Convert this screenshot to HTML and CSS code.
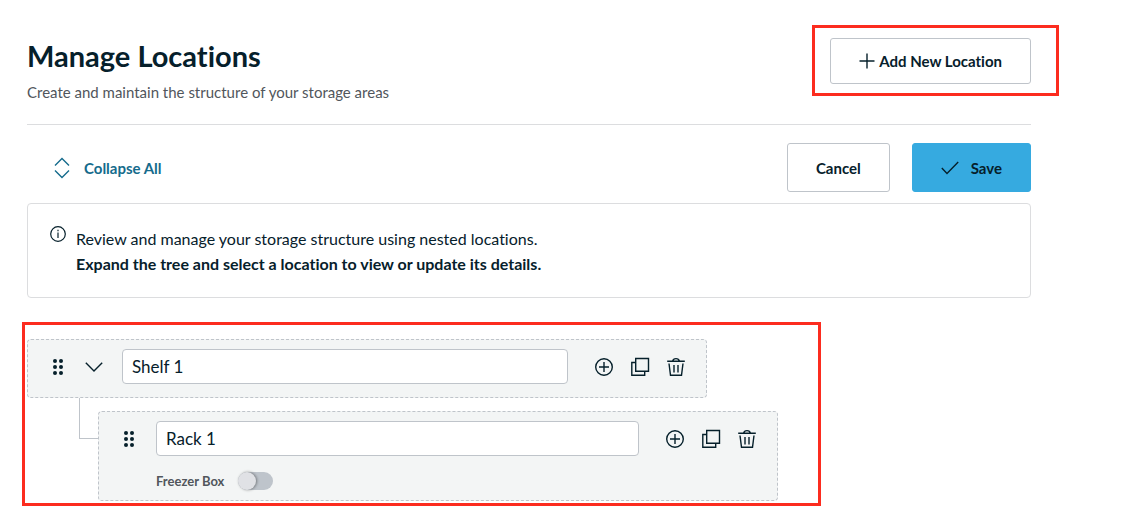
FILE: index.html
```
<!DOCTYPE html>
<html lang="en">

<head>
    <meta charset="UTF-8">
    <meta name="viewport" content="width=device-width, initial-scale=1.0">
    <title>Manage Locations</title>
    <link rel="stylesheet" href="styles.css">
</head>

<body>
    <!-- shared icons -->
    <svg class="sprite" aria-hidden="true">
        <symbol id="drag" viewBox="0 0 12 18">
            <g fill="currentColor" stroke="none">
                <circle cx="3" cy="3" r="2" /><circle cx="9" cy="3" r="2" />
                <circle cx="3" cy="9" r="2" /><circle cx="9" cy="9" r="2" />
                <circle cx="3" cy="15" r="2" /><circle cx="9" cy="15" r="2" />
            </g>
        </symbol>
        <symbol id="add" viewBox="0 0 20 20">
            <circle cx="10" cy="10" r="8.3" />
            <path d="M10 5v10M5 10h10" />
        </symbol>
        <symbol id="copy" viewBox="0 0 20 20">
            <path d="M5.7 1.5h12.8v12.8H5.7zM5.7 5.5H1.8v12.8h12.9v-4" />
        </symbol>
        <symbol id="trash" viewBox="0 0 20 20">
            <path d="M1.2 4.3h17.6M6.5 4.2C7 2.4 8 1.6 10 1.6s3 .8 3.5 2.6M3 6.5l1.5 11.8h11L17 6.5M8 8v7.5M12 8v7.5" />
        </symbol>
    </svg>

    <main class="page">
        <header class="page-header">
            <div>
                <h1 class="page-title">Manage Locations</h1>
                <p class="page-subtitle">Create and maintain the structure of your storage areas</p>
            </div>
            <div class="add-location">
                <button type="button" class="btn btn-add">
                    <svg class="icon-plus" viewBox="0 0 16 16"><path d="M8 .5v15M.5 8h15" /></svg>
                    Add New Location
                </button>
            </div>
        </header>

        <div class="toolbar">
            <button type="button" class="btn-link">
                <svg class="icon-collapse" viewBox="0 0 16 22"><path d="M1 8.5l7-7 7 7M1 13.5l7 7 7-7" /></svg>
                Collapse All
            </button>
            <div class="toolbar-actions">
                <button type="button" class="btn">Cancel</button>
                <button type="button" class="btn btn-primary">
                    <svg class="icon-check" viewBox="0 0 18 14"><path d="M.8 7L6 12.5 17.2 1" /></svg>
                    Save
                </button>
            </div>
        </div>

        <section class="info">
            <svg class="icon-info" viewBox="0 0 16 16">
                <circle cx="8" cy="8" r="7.3" />
                <path d="M8 6.5V12M8 3.7v1.5" />
            </svg>
            <div class="info-text">
                <p>Review and manage your storage structure using nested locations.</p>
                <p><strong>Expand the tree and select a location to view or update its details.</strong></p>
            </div>
        </section>

        <section class="tree">
            <div class="node">
                <div class="node-row">
                    <button type="button" class="icon-btn drag" aria-label="Move Shelf 1"><svg><use href="#drag" /></svg></button>
                    <button type="button" class="icon-btn toggle-node" aria-label="Collapse Shelf 1">
                        <svg viewBox="0 0 18 10"><path d="M.8.8L9 9 17.2.8" /></svg>
                    </button>
                    <input type="text" class="node-name" value="Shelf 1" aria-label="Location name">
                    <div class="node-actions">
                        <button type="button" class="icon-btn" aria-label="Add"><svg><use href="#add" /></svg></button>
                        <button type="button" class="icon-btn" aria-label="Duplicate"><svg><use href="#copy" /></svg></button>
                        <button type="button" class="icon-btn" aria-label="Delete"><svg><use href="#trash" /></svg></button>
                    </div>
                </div>
            </div>

            <div class="children">
                <div class="node">
                    <div class="node-row">
                        <button type="button" class="icon-btn drag" aria-label="Move Rack 1"><svg><use href="#drag" /></svg></button>
                        <input type="text" class="node-name" value="Rack 1" aria-label="Location name">
                        <div class="node-actions">
                            <button type="button" class="icon-btn" aria-label="Add"><svg><use href="#add" /></svg></button>
                            <button type="button" class="icon-btn" aria-label="Duplicate"><svg><use href="#copy" /></svg></button>
                            <button type="button" class="icon-btn" aria-label="Delete"><svg><use href="#trash" /></svg></button>
                        </div>
                    </div>
                    <div class="node-option">
                        <label for="freezer-box">Freezer Box</label>
                        <input type="checkbox" id="freezer-box" class="switch">
                    </div>
                </div>
            </div>
        </section>
    </main>
</body>

</html>
```
FILE: styles.css
```
* {
    box-sizing: border-box;
}

body {
    margin: 0;
    background: #fff;
    color: #06202b;
    font-family: Lato, sans-serif;
    font-size: 15px;
    font-variant-ligatures: none;
}

h1,
p {
    margin: 0;
}

button,
input {
    font-family: inherit;
    font-variant-ligatures: inherit;
    color: inherit;
}

button {
    cursor: pointer;
}

svg {
    fill: none;
    stroke: currentColor;
    stroke-width: 1.4;
    flex-shrink: 0;
}

.sprite {
    display: none;
}

.page {
    padding: 38px 101px 0 27px;
}

/* header */
.page-header {
    display: flex;
    justify-content: space-between;
    align-items: flex-start;
    padding-bottom: 22px;
    border-bottom: 1px solid #dcdddf;
}

.page-title {
    font-size: 29px;
    font-weight: 700;
    line-height: 36px;
}

.page-subtitle {
    margin-top: 8px;
    font-size: 15px;
    line-height: 20px;
    color: #51565c;
}

.btn {
    display: flex;
    align-items: center;
    justify-content: center;
    height: 49px;
    padding: 0 28px;
    border: 1px solid #bfc4ca;
    border-radius: 3px;
    background: #fff;
    font-size: 15px;
    font-weight: 700;
}

.add-location {
    position: relative;
}

.add-location::after {
    content: "";
    position: absolute;
    inset: -13px -28px -12px -18px;
    border: 3px solid #fc2c1f;
    pointer-events: none;
}

.btn-add {
    height: 46px;
    gap: 4px;
}

.icon-plus {
    width: 16px;
    height: 16px;
}

/* toolbar */
.toolbar {
    display: flex;
    justify-content: space-between;
    align-items: center;
    margin: 18px 0 11px;
}

.toolbar-actions {
    display: flex;
    gap: 22px;
}

.btn-primary {
    gap: 12px;
    border-color: #36aae0;
    background: #36aae0;
}

.icon-check {
    width: 18px;
    height: 14px;
}

.btn-link {
    display: flex;
    align-items: center;
    gap: 14px;
    padding: 0 0 0 27px;
    border: 0;
    background: none;
    color: #156b8c;
    font-size: 15px;
    font-weight: 700;
}

.icon-collapse {
    width: 16px;
    height: 22px;
}

/* info box */
.info {
    display: flex;
    gap: 10px;
    padding: 22px 22px 21px;
    border: 1px solid #dcdddf;
    border-radius: 4px;
}

.icon-info {
    width: 16px;
    height: 16px;
    stroke-width: 1.2;
}

.info-text {
    font-size: 16px;
    line-height: 25px;
}

/* location tree */
.tree {
    max-width: 799px;
    margin: 24px 0 0 -5px;
    padding: 14px 40px 2px 2px;
    border: 3px solid #fc2c1f;
}

.node {
    max-width: 680px;
    padding: 9px 20px 13px;
    border: 1px dashed #bfc4ca;
    border-radius: 4px;
    background: #f3f5f5;
}

.node-row {
    display: flex;
    align-items: center;
}

.icon-btn {
    display: flex;
    padding: 0;
    border: 0;
    background: none;
}

.icon-btn svg {
    width: 20px;
    height: 20px;
}

.drag svg {
    height: 18px;
}

.toggle-node {
    margin: 0 19px 0 17px;
}

.toggle-node svg {
    width: 18px;
    height: 10px;
}

.node-name {
    flex: 1;
    min-width: 0;
    height: 35px;
    padding: 0 9px;
    border: 1px solid #bfc4ca;
    border-radius: 4px;
    background: #fff;
    font-size: 17px;
}

.node-actions {
    display: flex;
    gap: 16px;
    margin-left: 26px;
}

.children {
    position: relative;
    margin-top: 13px;
    padding-left: 71px;
}

/* line from the parent to its child */
.children::before {
    content: "";
    position: absolute;
    top: -13px;
    left: 52px;
    width: 19px;
    height: 40px;
    border-left: 1px solid #bfc4ca;
    border-bottom: 1px solid #bfc4ca;
}

.children .node {
    margin-right: -40px;
    padding-bottom: 10px;
}

.children .drag {
    margin-right: 17px;
}

.node-option {
    display: flex;
    align-items: center;
    gap: 14px;
    margin-top: 16px;
    padding-left: 37px;
    color: #51565c;
    font-size: 13px;
    font-weight: 700;
}

.switch {
    appearance: none;
    display: flex;
    width: 35px;
    height: 18px;
    margin: 0;
    border-radius: 9px;
    background: #bec4cb;
}

.switch::before {
    content: "";
    width: 18px;
    height: 18px;
    border-radius: 50%;
    background: #e0e1e5;
    box-shadow: 1px 0 3px rgba(0, 0, 0, .4);
}

.switch:checked {
    justify-content: flex-end;
    background: #36aae0;
}
```
